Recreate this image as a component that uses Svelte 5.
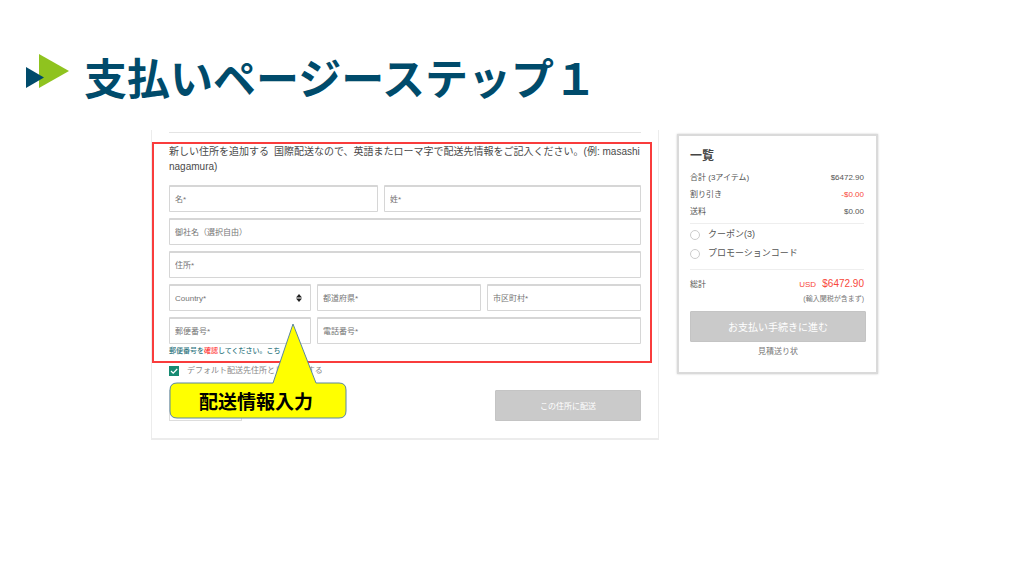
<script>
	let saveAsDefault = $state(true);
	let country = $state('');
	let discount = $state('');

	const totals = [
		{ label: '合計 (3アイテム)', value: '$6472.90' },
		{ label: '割り引き', value: '-$0.00', negative: true },
		{ label: '送料', value: '$0.00' }
	];

	const discounts = [
		{ id: 'coupon', label: 'クーポン(3)' },
		{ id: 'promo', label: 'プロモーションコード' }
	];
</script>

<header class="title-bar">
	<svg class="logo" viewBox="0 0 44 34" aria-hidden="true">
		<path d="M13 0L43 17L13 34Z" fill="#8fc31f" />
		<path d="M0 13L18 23.5L0 34Z" fill="#004b6b" />
	</svg>
	<h1>支払いページーステップ１</h1>
</header>

<main class="checkout">
	<form class="shipping">
		<hr class="top-rule" />

		<section class="highlight">
			<p class="intro">
				新しい住所を追加する&ensp;国際配送なので、英語またローマ字で配送先情報をご記入ください。(例:&nbsp;masashi nagamura)
			</p>

			<div class="fields">
				<div class="row name-row">
					<input type="text" placeholder="名*" aria-label="名" />
					<input type="text" placeholder="姓*" aria-label="姓" />
				</div>
				<div class="row">
					<input type="text" placeholder="御社名（選択自由）" aria-label="御社名" />
				</div>
				<div class="row">
					<input type="text" placeholder="住所*" aria-label="住所" />
				</div>
				<div class="row region-row">
					<div class="select-box">
						<select bind:value={country} aria-label="Country">
							<option value="">Country*</option>
						</select>
						<svg class="arrows" viewBox="0 0 6 8" aria-hidden="true">
							<path d="M3 0L6 3.5H0Z M3 8L0 4.5H6Z" fill="#222" />
						</svg>
					</div>
					<input type="text" placeholder="都道府県*" aria-label="都道府県" />
					<input type="text" placeholder="市区町村*" aria-label="市区町村" />
				</div>
				<div class="row phone-row">
					<input type="text" placeholder="郵便番号*" aria-label="郵便番号" />
					<input type="text" placeholder="電話番号*" aria-label="電話番号" />
				</div>
			</div>

			<p class="hint">郵便番号を<em>確認</em>してください。こち</p>
		</section>

		<label class="default-address">
			<input type="checkbox" bind:checked={saveAsDefault} />
			<svg class="tick" viewBox="0 0 10 10" aria-hidden="true">
				<path d="M2 5L4.200 7.200L8.200 3" fill="none" stroke="#fff" stroke-width="1.200" />
			</svg>
			<span>デフォルト配送先住所として設定する</span>
		</label>

		<div class="actions">
			<button class="cancel" type="button" aria-label="キャンセル"></button>
			<button class="primary submit" type="button">この住所に配送</button>
		</div>

		<div class="callout">
			<svg viewBox="0 0 178 97" aria-hidden="true">
				<path
					d="M8 61H104L124 2L147 61H170Q177 61 177 68V89Q177 96 170 96H8Q1 96 1 89V68Q1 61 8 61Z"
					fill="#ffff00"
					stroke="#5b87a0"
				/>
			</svg>
			<strong>配送情報入力</strong>
		</div>
	</form>

	<aside class="summary">
		<h2>一覧</h2>
		<dl class="totals">
			{#each totals as row}
				<div>
					<dt>{row.label}</dt>
					<dd class:negative={row.negative}>{row.value}</dd>
				</div>
			{/each}
		</dl>

		<div class="discounts">
			{#each discounts as item}
				<label>
					<input type="radio" name="discount" value={item.id} bind:group={discount} />
					{item.label}
				</label>
			{/each}
		</div>

		<div class="grand-total">
			<span>総計</span>
			<span class="amount">USD <b>$6472.90</b></span>
		</div>
		<p class="tax-note">(輸入関税が含まず)</p>
		<button class="primary pay" type="button">お支払い手続きに進む</button>
		<a class="quote" href="#quote">見積送り状</a>
	</aside>
</main>

<style>
	:global(body) {
		margin: 0;
		background: #fff;
		color: #555;
		font-family: 'Liberation Sans', 'Noto Sans CJK JP', sans-serif;
		font-size: 8px;
	}

	h1,
	h2,
	p,
	dl,
	dd {
		margin: 0;
	}

	input,
	select,
	button {
		box-sizing: border-box;
		min-width: 0;
		margin: 0;
		font-family: inherit;
		font-size: 8px;
	}

	.title-bar {
		display: flex;
		align-items: flex-start;
		gap: 14px;
		padding: 46px 26px 0;
	}

	.logo {
		flex: none;
		width: 44px;
		height: 34px;
		margin-top: 8px;
	}

	h1 {
		color: #004b6b;
		font-family: 'Noto Sans CJK JP', sans-serif;
		font-size: 43px;
		line-height: 60px;
		white-space: nowrap;
	}

	.checkout {
		display: grid;
		grid-template-columns: 508fr 201fr;
		align-items: start;
		gap: 18px;
		padding: 24px 146px 0 151px;
	}

	.shipping {
		position: relative;
		border: solid #ececec;
		border-width: 0 1px 2px;
		padding-bottom: 17px;
	}

	.top-rule {
		height: 1px;
		margin: 2px 17px 9px;
		border: none;
		background: #e4e4e4;
	}

	.highlight {
		margin-right: 6px;
		border: 2px solid #f93c3c;
		padding: 0 9px 0 15px;
	}

	.intro {
		margin-right: -8px;
		padding-bottom: 11px;
		color: #4a4a4a;
		font-size: 10px;
		line-height: 15px;
	}

	.fields {
		display: grid;
		gap: 6px;
	}

	.row {
		display: grid;
		gap: 6px;
	}

	.name-row {
		grid-template-columns: 209fr 257fr;
	}

	.region-row {
		grid-template-columns: 142fr 164fr 154fr;
	}

	.phone-row {
		grid-template-columns: 142fr 324fr;
	}

	.row input,
	.row select {
		width: 100%;
		height: 27px;
		border: 1px solid #d6d6d6;
		border-top: 2px solid #d6d6d6;
		border-radius: 1px;
		padding: 0 5px;
		background: #fff;
		color: #757575;
	}

	.row input::placeholder {
		color: #757575;
		opacity: 1;
	}

	.row select {
		display: block;
		appearance: none;
	}

	.select-box {
		position: relative;
	}

	.arrows {
		position: absolute;
		top: 10px;
		right: 9px;
		width: 6px;
		height: 8px;
		pointer-events: none;
	}

	.hint {
		padding-bottom: 4px;
		color: #2f7680;
		font-size: 7px;
		font-weight: 500;
		line-height: 13px;
	}

	.hint em {
		color: #f33;
		font-style: normal;
	}

	.default-address {
		position: relative;
		display: flex;
		align-items: center;
		gap: 8px;
		margin: 3px 17px 0;
		color: #888;
		line-height: 10px;
	}

	.default-address input {
		appearance: none;
		width: 10px;
		height: 10px;
		border: 1px solid #168a72;
	}

	.default-address input:checked {
		background: #168a72;
	}

	.tick {
		position: absolute;
		left: 0;
		width: 10px;
		height: 10px;
		pointer-events: none;
	}

	.actions {
		display: flex;
		justify-content: space-between;
		margin: 14px 17px 0;
	}

	.cancel {
		width: 73px;
		border: 1px solid #ddd;
		background: #fff;
	}

	.primary {
		border: 1px solid #c4c4c4;
		border-radius: 1px;
		background: #cacaca;
		color: #fff;
		cursor: pointer;
	}

	.submit {
		width: 146px;
		height: 31px;
	}

	.callout {
		position: absolute;
		top: 192px;
		left: 17px;
		width: 178px;
		height: 97px;
	}

	.callout svg {
		position: absolute;
		inset: 0;
	}

	.callout strong {
		position: absolute;
		inset: 61px 4px 0 0;
		color: #000;
		font-family: 'Noto Sans CJK JP', sans-serif;
		font-size: 19px;
		line-height: 36px;
		text-align: center;
	}

	.summary {
		margin-top: 4px;
		border: 2px solid #dadada;
		padding: 12px 10px 13px 11px;
		box-shadow: 0 0 2px #ccc;
	}

	h2 {
		color: #444;
		font-size: 12px;
		line-height: 16px;
	}

	.totals {
		margin-right: 2px;
		border-bottom: 1px solid #eee;
		padding: 5px 0 3px;
	}

	.totals div,
	.grand-total {
		display: flex;
		align-items: center;
		justify-content: space-between;
		line-height: 17px;
	}

	.negative,
	.amount {
		color: #f8483a;
	}

	.discounts {
		display: grid;
		margin-right: 2px;
		border-bottom: 1px solid #eee;
		padding: 1px 0 6px;
	}

	.discounts label {
		display: flex;
		align-items: center;
		gap: 8px;
		font-size: 9px;
		line-height: 19px;
	}

	.discounts input {
		appearance: none;
		width: 10px;
		height: 10px;
		border: 1px solid #ccc;
		border-radius: 50%;
	}

	.discounts input:checked {
		background: #888;
	}

	.grand-total {
		padding: 5px 2px 0 0;
	}

	.amount b {
		margin-left: 4px;
		font-size: 10px;
		font-weight: 400;
	}

	.tax-note {
		padding: 0 2px 6px 0;
		color: #777;
		font-size: 7px;
		line-height: 12px;
		text-align: right;
	}

	.pay {
		width: 100%;
		height: 31px;
		font-size: 10px;
	}

	.quote {
		display: block;
		margin-top: 3px;
		color: #777;
		line-height: 14px;
		text-align: center;
		text-decoration: none;
	}
</style>
